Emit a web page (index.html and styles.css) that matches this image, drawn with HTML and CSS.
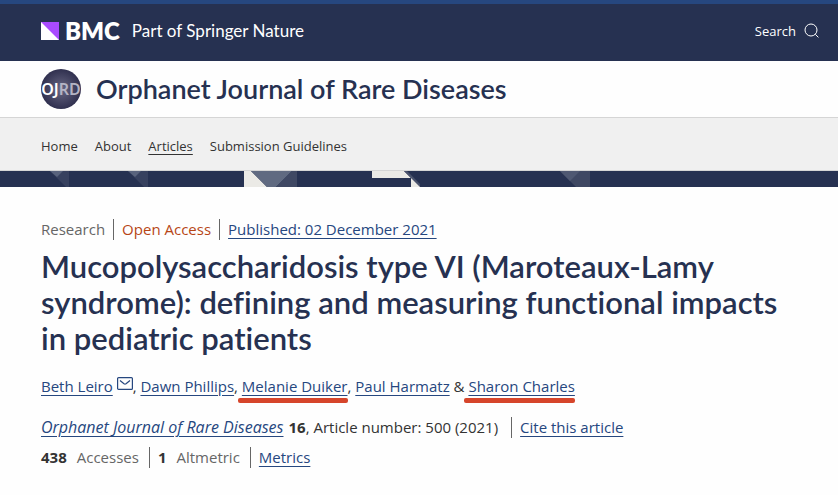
FILE: index.html
```html
<!DOCTYPE html>
<html lang="en">
<head>
    <meta charset="UTF-8">
    <meta name="viewport" content="width=device-width, initial-scale=1.0">
    <title>Mucopolysaccharidosis type VI (Maroteaux-Lamy syndrome) | Orphanet Journal of Rare Diseases</title>
    <link rel="stylesheet" href="styles.css">
</head>
<body>
    <!-- Publisher Header -->
    <header class="publisher">
        <a class="brand" href="#">
            <svg class="brand-mark" viewBox="0 0 18 18" aria-hidden="true">
                <rect width="18" height="18" fill="#a94bff"/>
                <path d="M0 0 L18 18 H0 Z" fill="#fff"/>
            </svg>
            <span class="brand-name">BMC</span>
            <span class="brand-tagline">Part of Springer Nature</span>
        </a>
        <a class="search" href="#">
            Search
            <svg class="search-icon" viewBox="0 0 16 16" aria-hidden="true">
                <circle cx="7" cy="7" r="6"/>
                <path d="M11.3 11.3 L14.4 14.4"/>
            </svg>
        </a>
    </header>

    <!-- Journal Title -->
    <div class="journal">
        <svg class="journal-logo" viewBox="0 0 40 40" aria-hidden="true">
            <defs>
                <radialGradient id="disc">
                    <stop offset="0" stop-color="#686783"/>
                    <stop offset="1" stop-color="#30304f"/>
                </radialGradient>
                <clipPath id="disc-clip"><circle cx="20" cy="20" r="20"/></clipPath>
            </defs>
            <circle cx="20" cy="20" r="20" fill="url(#disc)"/>
            <text class="journal-initials" x="20" y="26" text-anchor="middle" clip-path="url(#disc-clip)">OJ<tspan class="journal-initials-dim">RD</tspan></text>
        </svg>
        <a class="journal-name" href="#">Orphanet Journal of Rare Diseases</a>
    </div>

    <nav class="menu">
        <a href="#">Home</a>
        <a href="#">About</a>
        <a class="current" href="#">Articles</a>
        <a href="#">Submission Guidelines</a>
    </nav>

    <!-- Decorative Band -->
    <div class="band">
        <svg class="band-art" viewBox="0 0 838 16" aria-hidden="true">
            <path d="M50 0 H69 V16 H66 Z" fill="#37415f"/>
            <path d="M50 0 H63 L57 6 Z" fill="#59637d"/>
            <path d="M128 0 H148 V16 H144 Z" fill="#37415f"/>
            <path d="M128 0 H141 L135 6 Z" fill="#59637d"/>
            <path d="M244 0 H251 L267 16 H244 Z" fill="#ebeae6"/>
            <path d="M251 0 H292 L276 16 H267 Z" fill="#606a81"/>
            <path d="M292 0 H297 V16 H276 Z" fill="#3f4863"/>
            <path d="M372 0 H404 L411 7 H372 Z" fill="#ebeae6"/>
            <path d="M404 0 H407 L420 13 V16 Z" fill="#4a536d"/>
            <path d="M411 7 L420 16 H411 Z" fill="#ebeae6"/>
            <path d="M560 0 H590 V16 H576 Z" fill="#3f4863"/>
            <path d="M560 0 H580 L570 10 Z" fill="#4f5872"/>
        </svg>
    </div>

    <!-- Article Header -->
    <main class="article">
        <ul class="divided">
            <li class="muted">Research</li>
            <li class="open-access">Open Access</li>
            <li><a href="#">Published: 02 December 2021</a></li>
        </ul>

        <h1>Mucopolysaccharidosis type VI (Maroteaux-Lamy syndrome): defining and measuring functional impacts in pediatric patients</h1>

        <p class="authors">
            <a href="#">Beth Leiro</a>
            <svg class="mail-icon" viewBox="0 0 16 13" aria-hidden="true">
                <rect x="0.6" y="0.6" width="14.8" height="11.8" rx="1"/>
                <path d="M3 3.5 L7 6.8 Q8 7.5 9 6.8 L13 3.5"/>
            </svg>,
            <a href="#">Dawn Phillips</a>,
            <a class="marked" href="#">Melanie Duiker</a>,
            <a href="#">Paul Harmatz</a> &amp;
            <a class="marked" href="#">Sharon Charles</a>
        </p>

        <ul class="divided citation">
            <li><a class="journal-link" href="#">Orphanet Journal of Rare Diseases</a><b>16</b>, Article number: 500 (2021)</li>
            <li><a href="#">Cite this article</a></li>
        </ul>

        <ul class="divided metrics">
            <li><b>438</b><span class="muted">Accesses</span></li>
            <li><b>1</b><span class="muted">Altmetric</span></li>
            <li><a href="#">Metrics</a></li>
        </ul>
    </main>
</body>
</html>
```
FILE: styles.css
```css
/* General Styles */
* {
    box-sizing: border-box;
}

body {
    margin: 0;
    background: #fefefe;
    color: #333;
    font-family: "Open Sans", "Noto Sans", sans-serif;
    font-size: 15px;
    line-height: 24px;
}

a {
    color: #26477f;
    text-decoration: underline;
    text-underline-offset: 3px;
}

/* Publisher Header */
.publisher {
    display: flex;
    justify-content: space-between;
    align-items: center;
    height: 61px;
    padding: 0 18px 3px 41px;
    border-top: 4px solid #26477f;
    background: #263151;
}

.brand,
.search {
    display: flex;
    align-items: center;
    color: #fff;
    text-decoration: none;
}

.brand {
    font-family: Lato, sans-serif;
}

.brand-mark {
    width: 18px;
    height: 18px;
}

.brand-name {
    margin-left: 6px;
    font-size: 24px;
    font-weight: 800;
}

.brand-tagline {
    margin-left: 12px;
    font-size: 17px;
}

.search {
    gap: 8px;
    font-size: 13px;
}

.search-icon {
    width: 16px;
    height: 16px;
    fill: none;
    stroke: #fff;
    stroke-width: 1;
}

/* Journal Title */
.journal {
    display: flex;
    align-items: center;
    gap: 15px;
    padding: 8px 41px;
    border-bottom: 1px solid #d5d5d5;
}

.journal-logo {
    width: 40px;
    height: 40px;
}

.journal-initials {
    fill: #fff;
    font-family: "Noto Sans", sans-serif;
    font-size: 16px;
    font-weight: 600;
}

.journal-initials-dim {
    fill: #b4b4c4;
}

.journal-name {
    color: #263151;
    font-family: Lato, sans-serif;
    font-size: 27px;
    font-weight: 600;
    text-decoration: none;
}

/* Menu */
.menu {
    display: flex;
    gap: 17px;
    padding: 16px 41px 12px;
    border-bottom: 1px solid #d5d5d5;
    background: #f0f0f0;
    font-size: 13px;
}

.menu a {
    color: #333;
    text-decoration: none;
}

.menu .current {
    text-decoration: underline;
}

.band {
    height: 16px;
    overflow: hidden;
    background: #263151;
}

.band-art {
    display: block;
    width: 838px;
    height: 16px;
}

/* Article Header */
.article {
    padding: 30px 41px;
}

.divided {
    display: flex;
    flex-wrap: wrap;
    margin: 0;
    padding: 0;
    list-style: none;
}

.divided li {
    display: flex;
    align-items: center;
    white-space: pre;
}

.divided li + li::before {
    content: "";
    height: 21px;
    margin: 0 8px;
    border-left: 1px solid #666;
}

.muted {
    color: #666;
}

.open-access {
    color: #b74616;
}

h1 {
    margin: 7px 0 18px;
    color: #263151;
    font-family: Lato, sans-serif;
    font-size: 31px;
    font-weight: 600;
    font-variant-ligatures: none;
    line-height: 36px;
}

.authors {
    margin: 0 0 17px;
}

.mail-icon {
    width: 16px;
    height: 13px;
    vertical-align: 2px;
    fill: none;
    stroke: #26477f;
    stroke-width: 1.2;
}

.marked {
    position: relative;
}

/* Red highlight stroke under a name */
.marked::after {
    content: "";
    position: absolute;
    right: 0;
    bottom: -7px;
    left: -4px;
    height: 5px;
    border-radius: 2px;
    background: #d6452b;
}

.journal-link {
    margin-right: 5px;
    font-size: 16px;
    font-style: italic;
}

.citation li + li::before {
    margin-left: 13px;
}

.metrics {
    margin-top: 6px;
}

.metrics .muted {
    margin-left: 10px;
}

.metrics li + li::before {
    margin-left: 10px;
}
```
